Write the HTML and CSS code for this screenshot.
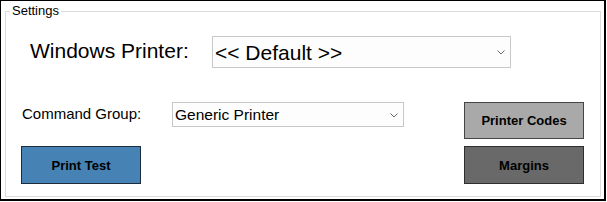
FILE: index.html
```html
<!DOCTYPE html>
<html lang="en">
<head>
    <meta charset="UTF-8">
    <title>Settings</title>
    <link rel="stylesheet" href="styles.css">
</head>
<body>
    <div class="frame">
        <fieldset class="settings">
            <legend>Settings</legend>

            <div class="printer-row">
                <label for="win-printer">Windows Printer:</label>
                <div class="select big">
                    <select id="win-printer">
                        <option>&lt;&lt; Default &gt;&gt;</option>
                    </select>
                    <svg class="chevron" width="8" height="5" viewBox="0 0 8 5"><path d="M0.5 0.5 L4 4 L7.5 0.5" fill="none" stroke="#6a6a6a" stroke-width="1"/></svg>
                </div>
            </div>

            <div class="lower">
                <div class="left-col">
                    <div class="group-row">
                        <label for="cmd-group">Command Group:</label>
                        <div class="select small">
                            <select id="cmd-group">
                                <option>Generic Printer</option>
                            </select>
                            <svg class="chevron" width="8" height="5" viewBox="0 0 8 5"><path d="M0.5 0.5 L4 4 L7.5 0.5" fill="none" stroke="#6a6a6a" stroke-width="1"/></svg>
                        </div>
                    </div>
                    <button class="btn print-test">Print Test</button>
                </div>
                <div class="right-col">
                    <button class="btn codes">Printer Codes</button>
                    <button class="btn margins">Margins</button>
                </div>
            </div>
        </fieldset>
    </div>
</body>
</html>
```

FILE: styles.css
```css
body {
    margin: 0; padding: 0; background: #fff; font-family: "Liberation Sans", Arial, sans-serif; color: #000;
}
.frame {
    box-sizing: border-box; width: 606px; height: 201px;
    border-style: solid; border-color: #000; border-width: 1px 2px 2px 1px;
    display: flex; flex-direction: column;
}
.settings {
    flex: 1; margin: 3px 3px 2px 4px; padding: 0; border: 1px solid #dcdcdc; min-width: 0;
}
.settings legend {
    font-size: 13px; line-height: 14px; margin-left: 4px; padding: 0 2px;
}

/* Windows printer row */
.printer-row {
    display: flex; align-items: center; padding: 18px 0 0 24px;
}
.printer-row label {
    font-size: 21px; width: 182px; margin-top: -2px;
}

/* selects */
.select { position: relative; }
.select select {
    -webkit-appearance: none; appearance: none; box-sizing: border-box; width: 100%; height: 100%;
    margin: 0; border: 1px solid #c8c8c8; border-radius: 0; background: #fdfdfd; color: #000;
    font-family: "Liberation Sans", Arial, sans-serif; padding: 0 20px 0 2px; outline: none;
}
.select.big { width: 299px; height: 32px; }
.select.big select { font-size: 21px; }
.select.small { width: 232px; height: 25px; }
.select.small select { font-size: 15.5px; }
.chevron {
    position: absolute; right: 6px; top: 50%; margin-top: -2px; pointer-events: none;
}

/* lower part */
.lower {
    display: flex; justify-content: space-between; padding: 34px 16px 0 15px;
}
.group-row {
    display: flex; align-items: center;
}
.group-row label {
    font-size: 15px; width: 150px; padding-left: 1px; margin-top: -2px;
}
.btn {
    box-sizing: border-box; width: 120px; height: 37px; margin: 0; padding: 0;
    font-family: "Liberation Sans", Arial, sans-serif; font-size: 13px; font-weight: bold; color: #000;
    border: 1px solid #333; border-radius: 0; cursor: pointer;
}
.print-test {
    display: block; margin-top: 19px; width: 120px; height: 38px; background: #4682b4; border-color: #1d2d3b;
}
.right-col {
    display: flex; flex-direction: column; gap: 7px;
}
.codes { background: #a9a9a9; border-color: #454545; }
.margins { background: #696969; border-color: #2e2e2e; height: 38px; }
```
